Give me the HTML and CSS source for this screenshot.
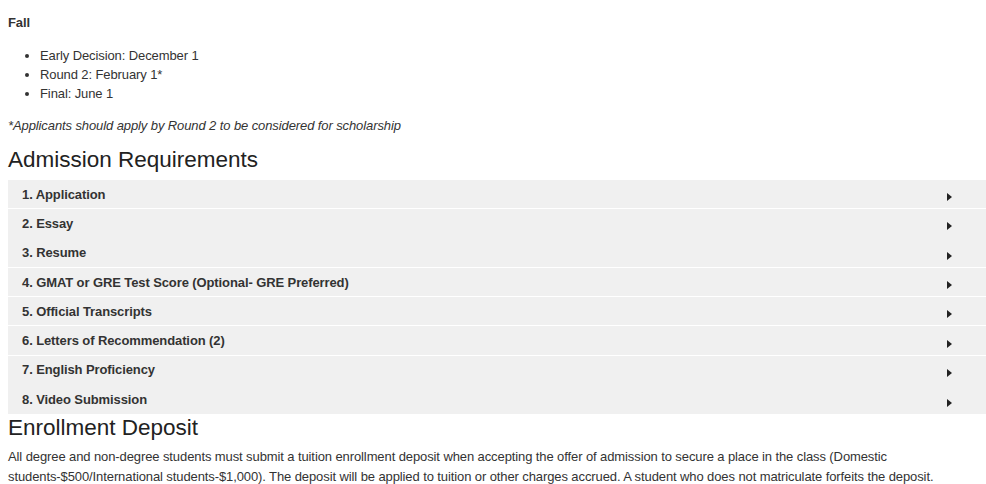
FILE: index.html
```html
<!DOCTYPE html>
<html lang="en">
<head>
    <meta charset="UTF-8">
    <meta name="viewport" content="width=device-width, initial-scale=1.0">
    <title>Admissions</title>
    <link rel="stylesheet" href="styles.css">
</head>
<body>
    <div class="content">
        <p class="term">Fall</p>
        <ul class="deadlines">
            <li>Early Decision: December 1</li>
            <li>Round 2: February 1*</li>
            <li>Final: June 1</li>
        </ul>
        <p class="note">*Applicants should apply by Round 2 to be considered for scholarship</p>

        <h2>Admission Requirements</h2>
        <div class="accordion">
            <div class="acc-row"><span>1. Application</span><span class="arrow"></span></div>
            <div class="acc-row no-line"><span>2. Essay</span><span class="arrow"></span></div>
            <div class="acc-row"><span>3. Resume</span><span class="arrow"></span></div>
            <div class="acc-row"><span>4. GMAT or GRE Test Score (Optional- GRE Preferred)</span><span class="arrow"></span></div>
            <div class="acc-row"><span>5. Official Transcripts</span><span class="arrow"></span></div>
            <div class="acc-row"><span>6. Letters of Recommendation (2)</span><span class="arrow"></span></div>
            <div class="acc-row no-line"><span>7. English Proficiency</span><span class="arrow"></span></div>
            <div class="acc-row no-line"><span>8. Video Submission</span><span class="arrow"></span></div>
        </div>

        <h2 class="deposit-title">Enrollment Deposit</h2>
        <p class="deposit">All degree and non-degree students must submit a tuition enrollment deposit when accepting the offer of admission to secure a place in the class (Domestic students-$500/International students-$1,000). The deposit will be applied to tuition or other charges accrued. A student who does not matriculate forfeits the deposit.</p>
    </div>
</body>
</html>
```

FILE: styles.css
```css
body {
    margin: 0;
    padding: 0 0 0 8px;
    font-family: "Liberation Sans", Arial, sans-serif;
    font-size: 13px;
    letter-spacing: -0.1px;
    line-height: 20px;
    color: #333333;
    background-color: #ffffff;
}
.content {
    width: 978px;
}
.term {
    margin: 13px 0 13px 0;
    font-weight: bold;
}
.deadlines {
    margin: 0;
    padding-left: 32px;
    line-height: 19px;
}
.note {
    margin: 13px 0 0 0;
    font-style: italic;
}
h2 {
    margin: 10px 0 7px 0;
    font-size: 22.5px;
    font-weight: normal;
    letter-spacing: 0;
    line-height: 27px;
    color: #222222;
}
.accordion {
    background-color: #f0f0f0;
}
.acc-row {
    display: flex;
    justify-content: space-between;
    align-items: center;
    height: 27.3px;
    padding: 1px 34px 0 14px;
    font-weight: bold;
    border-bottom: 1px solid #ffffff;
    color: #333333;
}
.acc-row.no-line {
    border-bottom-color: #f0f0f0;
}
.acc-row:last-child {
    border-bottom: none;
    height: 28.3px;
}
.arrow {
    width: 0;
    height: 0;
    margin-top: 5px;
    border-left: 5px solid #222222;
    border-top: 4px solid transparent;
    border-bottom: 4px solid transparent;
}
.deposit-title {
    margin: 0 0 6px 0;
}
.deposit {
    margin: 0;
}
```
